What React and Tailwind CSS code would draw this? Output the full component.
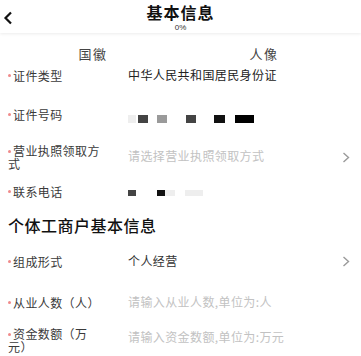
import React from "react";

const font = { fontFamily: '"Noto Sans CJK SC", "Noto Sans", sans-serif' };

function Dot() {
  return <span className="inline-block w-[3px] h-[3px] rounded-full bg-[#f08a8a] align-middle mr-[2px] mb-[3px]" />;
}

function Chevron() {
  return (
    <svg width="8" height="11" viewBox="0 0 8 11" className="shrink-0">
      <polyline points="1.5,1 6.5,5.5 1.5,10" fill="none" stroke="#9a9a9a" strokeWidth="1.4" />
    </svg>
  );
}

function Row({ label, children, chevron, className = "" }) {
  return (
    <div className={"flex items-center h-[28px] pl-[8px] pr-[11px] " + className}>
      <div className="w-[97px] shrink-0 text-[12px] leading-[13px] tracking-[0.4px] text-[#3a3a3a]">
        <Dot />
        {label}
      </div>
      <div className="ml-[23px] flex-1 flex items-center text-[12px] tracking-[0.4px]">{children}</div>
      {chevron && <Chevron />}
    </div>
  );
}

export default function App() {
  return (
    <div className="w-[361px] h-[356px] bg-white overflow-hidden" style={font}>
      <div className="relative h-[33px] shadow-[0_1px_3px_rgba(0,0,0,0.08)]">
        <svg width="10" height="14" viewBox="0 0 10 14" className="absolute left-[3px] top-[11px]">
          <polyline points="8,1.5 2.5,7 8,12.5" fill="none" stroke="#111" strokeWidth="2.2" />
        </svg>
        <div className="flex flex-col items-center">
          <div className="text-[16px] font-bold leading-[18px] mt-[3px] tracking-[1px] text-[#111]">基本信息</div>
          <div className="text-[8px] leading-[9px] mt-[2px] text-[#333]" style={{ fontFamily: '"Liberation Sans", sans-serif' }}>0%</div>
        </div>
      </div>

      <div className="grid grid-cols-2 pl-[7.5px] pr-[11.5px] mt-[11px] h-[17px] items-center text-[13px] tracking-[1.5px] text-[#444]">
        <div className="text-center">国徽</div>
        <div className="text-center">人像</div>
      </div>

      <Row label="证件类型" className="h-[24px]">
        <span className="text-[#222]">中华人民共和国居民身份证</span>
      </Row>

      <Row label="证件号码" className="mt-[11px]">
        <div className="flex items-center mt-[9px]">
          <div className="w-[8px] h-[8px] bg-[#eeeeee]" />
          <div className="w-[10px] h-[8px] bg-[#444] ml-[2px]" />
          <div className="w-[10px] h-[8px] bg-[#9a9a9a] ml-[9px]" />
          <div className="w-[10px] h-[8px] bg-[#444] ml-[19px]" />
          <div className="w-[11px] h-[8px] bg-[#111] ml-[18px]" />
          <div className="w-[19px] h-[8px] bg-[#000] ml-[10px]" />
        </div>
      </Row>

      <Row label="营业执照领取方式" chevron className="mt-[15px]">
        <span className="text-[#c2c2c2] mt-[-3px]">请选择营业执照领取方式</span>
      </Row>

      <Row label="联系电话" className="mt-[6px]">
        <div className="flex items-center mt-[3px]">
          <div className="w-[8px] h-[6px] bg-[#444]" />
          <div className="w-[8px] h-[6px] bg-[#111] ml-[21px]" />
          <div className="w-[10px] h-[6px] bg-[#eeeeee]" />
          <div className="w-[18px] h-[6px] bg-[#eeeeee] ml-[10px]" />
        </div>
      </Row>

      <div className="mt-[6px] h-[28px] flex items-center pl-[8px] text-[16px] font-medium tracking-[0.5px] text-[#111]">
        个体工商户基本信息
      </div>

      <Row label="组成形式" chevron className="mt-[8px]">
        <span className="text-[#333]">个人经营</span>
      </Row>

      <Row label="从业人数（人）" className="mt-[13px]">
        <span className="text-[#c2c2c2]">请输入从业人数,单位为:人</span>
      </Row>

      <Row label="资金数额（万元）" className="mt-[10px]">
        <span className="text-[#c2c2c2] mt-[-6px]">请输入资金数额,单位为:万元</span>
      </Row>
    </div>
  );
}
